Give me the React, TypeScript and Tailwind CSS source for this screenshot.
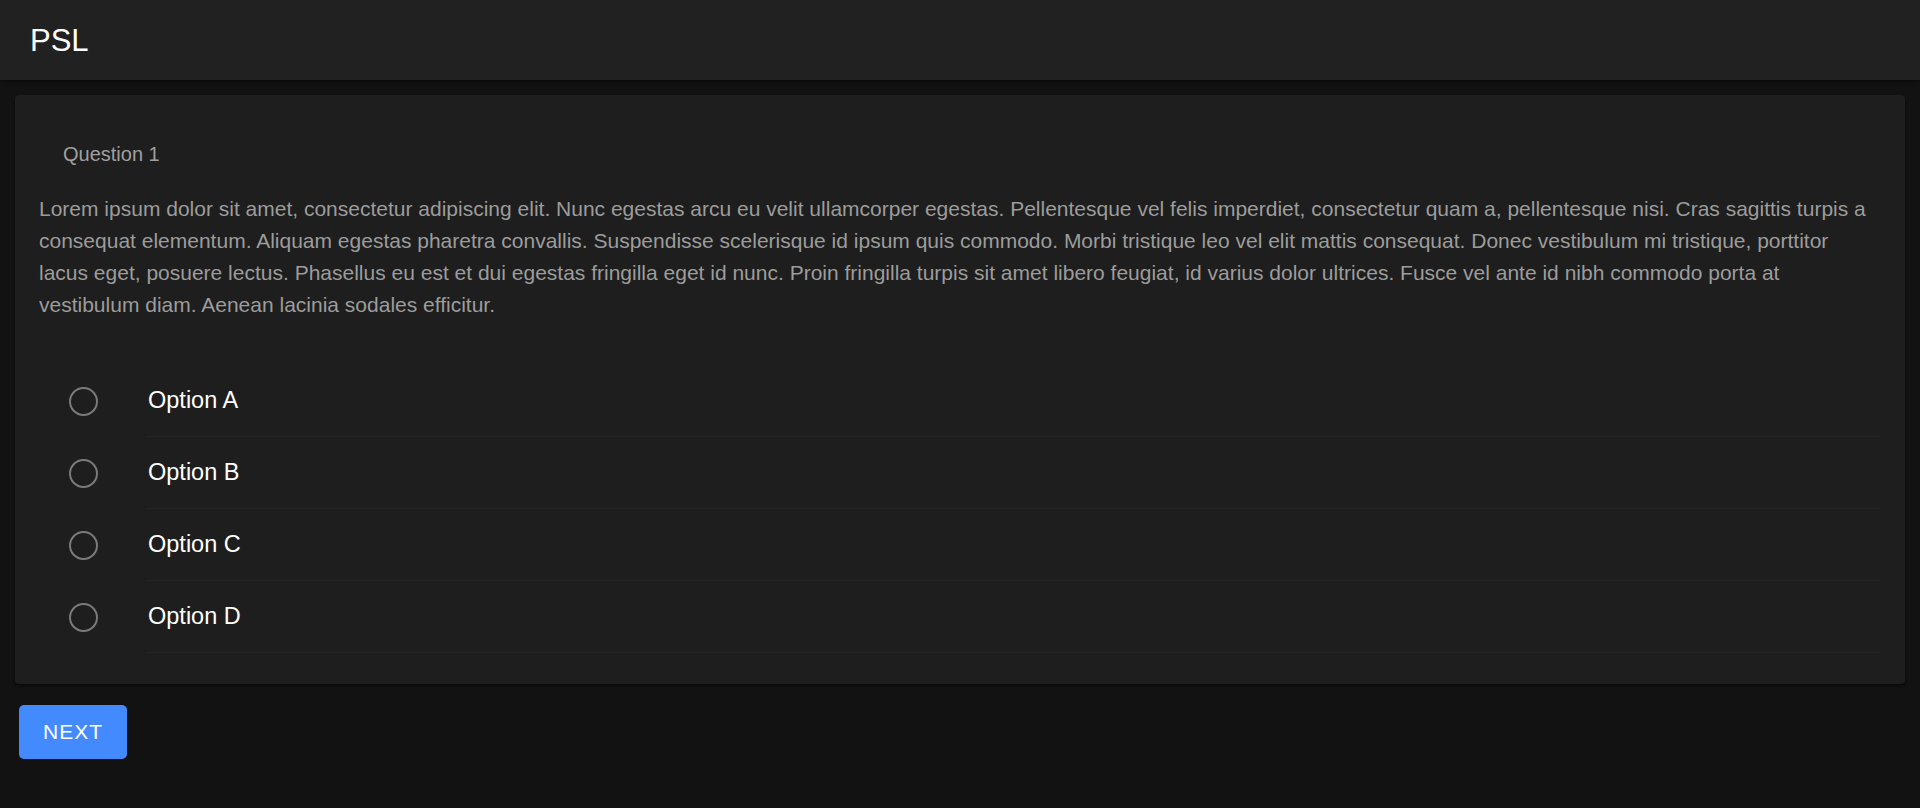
import React, { useState } from 'react'

const options = ['Option A', 'Option B', 'Option C', 'Option D']

const question =
  'Lorem ipsum dolor sit amet, consectetur adipiscing elit. Nunc egestas arcu eu velit ullamcorper egestas. Pellentesque vel felis imperdiet, consectetur quam a, pellentesque nisi. Cras sagittis turpis a consequat elementum. Aliquam egestas pharetra convallis. Suspendisse scelerisque id ipsum quis commodo. Morbi tristique leo vel elit mattis consequat. Donec vestibulum mi tristique, porttitor lacus eget, posuere lectus. Phasellus eu est et dui egestas fringilla eget id nunc. Proin fringilla turpis sit amet libero feugiat, id varius dolor ultrices. Fusce vel ante id nibh commodo porta at vestibulum diam. Aenean lacinia sodales efficitur.'

const App = () => {
  const [selected, setSelected] = useState<string | null>(null)

  return (
    <div className="min-h-screen bg-[#121212] font-['Liberation_Sans',Arial,sans-serif]">
      <header className="h-20 bg-[#212121] flex items-center px-[30px] shadow-[0_2px_4px_rgba(0,0,0,0.4)]">
        <h1 className="text-[31px] text-white leading-none">PSL</h1>
      </header>

      <main className="p-[15px]">
        <div className="bg-[#1e1e1e] rounded-[4px] shadow-[0_2px_3px_rgba(0,0,0,0.5)] px-6 pt-[44px] pb-[31px]">
          <div className="text-[20px] leading-[30px] text-[#a0a0a0] pl-6">Question 1</div>
          <p className="mt-[24px] text-[21px] leading-[32px] text-[#9c9c9c]">{question}</p>

          <ul className="mt-[44px]">
            {options.map((opt) => (
              <li key={opt} className="h-[72px] flex items-center relative">
                <button
                  type="button"
                  onClick={() => setSelected(opt)}
                  className="ml-[30px] w-[29px] h-[29px] rounded-full border-[2.5px] border-[#7a7a7a] flex items-center justify-center"
                >
                  {selected === opt && <span className="w-[13px] h-[13px] rounded-full bg-[#7a7a7a]" />}
                </button>
                <span className="ml-[50px] text-[23.5px] text-white">{opt}</span>
                <span className="absolute left-[107px] right-0 bottom-0 h-px bg-[#252525]" />
              </li>
            ))}
          </ul>
        </div>

        <button
          type="button"
          className="mt-[21px] ml-1 h-[54px] px-6 rounded-[5px] bg-[#448aff] text-white text-[21px] tracking-[1px] uppercase"
        >
          Next
        </button>
      </main>
    </div>
  )
}

export default App
